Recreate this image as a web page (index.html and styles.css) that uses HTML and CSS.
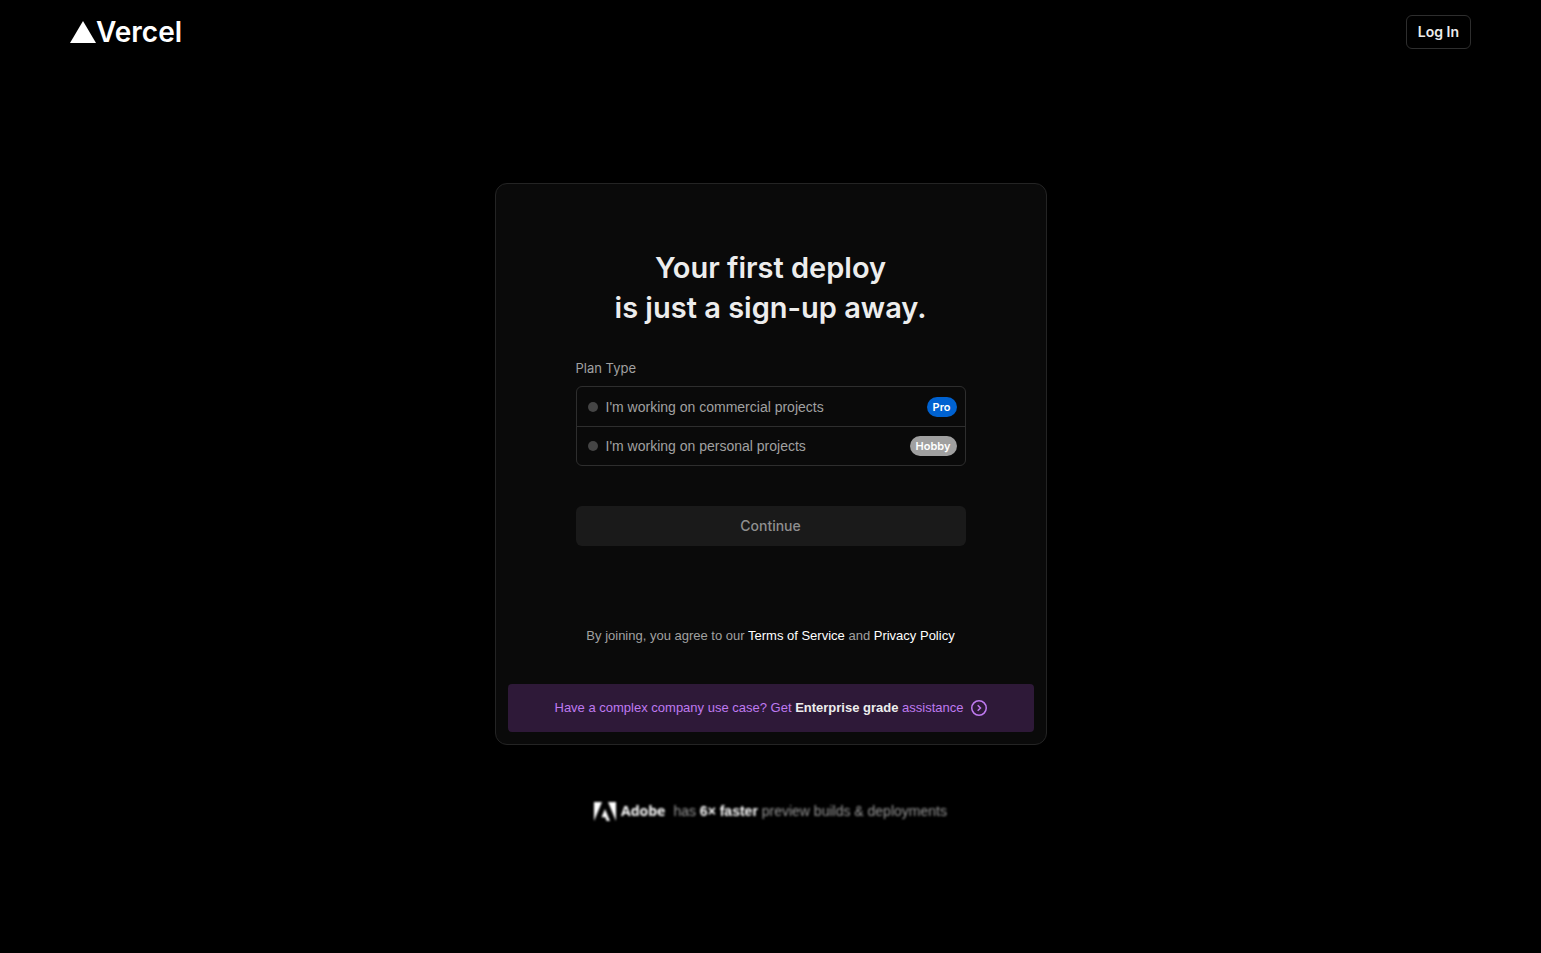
FILE: index.html
```html
<!DOCTYPE html>
<html lang="en">
<head>
<meta charset="utf-8">
<meta name="viewport" content="width=device-width, initial-scale=1">
<title>Sign Up – Vercel</title>
<link rel="stylesheet" href="styles.css">
</head>
<body>
<header class="header">
  <a class="brand" href="#">
    <svg class="brand-mark" viewBox="0 0 26 22" aria-hidden="true"><path d="M13 0 26 22H0z" fill="currentColor"/></svg>
    <span>Vercel</span>
  </a>
  <a class="login" href="#">Log In</a>
</header>
<main class="main">
  <section class="card">
    <form class="signup">
      <h1 class="title">Your first deploy<br>is just a sign-up away.</h1>
      <fieldset class="plans">
        <legend class="plans-label">Plan Type</legend>
        <div class="plan-list">
          <label class="plan">
            <input class="plan-radio" type="radio" name="plan" value="pro">
            <span class="plan-text">I'm working on commercial projects</span>
            <span class="badge badge-pro">Pro</span>
          </label>
          <label class="plan">
            <input class="plan-radio" type="radio" name="plan" value="hobby">
            <span class="plan-text">I'm working on personal projects</span>
            <span class="badge badge-hobby">Hobby</span>
          </label>
        </div>
      </fieldset>
      <button class="continue" type="submit" disabled>Continue</button>
    </form>
    <p class="legal">By joining, you agree to our <a href="#">Terms of Service</a> and <a href="#">Privacy Policy</a></p>
    <a class="enterprise" href="#">
      <span>Have a complex company use case? Get <strong>Enterprise grade</strong> assistance</span>
      <svg class="enterprise-icon" viewBox="0 0 16 16" fill="none" stroke="currentColor" stroke-width="1.5" aria-hidden="true"><circle cx="8" cy="8" r="7.25"/><path d="m6.7 5.2 2.8 2.8-2.8 2.8"/></svg>
    </a>
  </section>
  <p class="proof">
    <svg class="adobe-mark" viewBox="0 0 22 19" fill="currentColor" aria-hidden="true"><path d="M0 0h8L0 19zM14 0h8v19zM11 7l5 12h-3.300l-1.500-3.800H7.500z"/></svg>
    <span class="adobe-name">Adobe</span>
    <span>has <strong>6× faster</strong> preview builds &amp; deployments</span>
  </p>
</main>
</body>
</html>
```
FILE: styles.css
```css
* { box-sizing: border-box; }

body {
  margin: 0;
  min-height: 100vh;
  background: #000;
  color: #ededed;
  font-family: Inter, "Liberation Sans", sans-serif;
  font-size: 13px;
  line-height: 20px;
}

a { color: inherit; text-decoration: none; }

.header {
  display: flex;
  align-items: center;
  justify-content: space-between;
  height: 64px;
  padding: 0 70px;
}

.brand {
  display: flex;
  align-items: center;
  color: #fff;
  font-size: 28px;
  font-weight: 600;
  line-height: 32px;
}

.brand-mark { width: 26px; height: 22px; }

.login {
  padding: 6px 11px;
  border: 1px solid #2e2e2e;
  border-radius: 6px;
  font-size: 14px;
  font-weight: 600;
}

.main {
  display: flex;
  flex-direction: column;
  align-items: center;
  padding: 119px 16px 48px;
}

.card {
  width: 100%;
  max-width: 552px;
  padding: 12px;
  border: 1px solid #242424;
  border-radius: 12px;
  background: #0a0a0a;
}

.signup {
  max-width: 390px;
  margin: 0 auto;
  padding-top: 52px;
}

.title {
  margin: 0 0 30px;
  font-size: 29px;
  font-weight: 600;
  line-height: 40px;
  text-align: center;
}

.plans {
  min-width: 0;
  margin: 0 0 40px;
  padding: 0;
  border: 0;
}

.plans-label {
  margin-bottom: 8px;
  padding: 0;
  color: #a1a1a1;
}

.plan-list {
  border: 1px solid #2e2e2e;
  border-radius: 6px;
}

.plan {
  display: flex;
  align-items: center;
  gap: 8px;
  height: 39px;
  padding: 0 8px 0 11px;
  color: #a1a1a1;
}

.plan + .plan { border-top: 1px solid #2e2e2e; }

.plan-radio {
  appearance: none;
  width: 10px;
  height: 10px;
  margin: 0;
  border-radius: 50%;
  background: #454545;
}

.plan-radio:checked { background: #ededed; }

.plan-text {
  flex: 1;
  font-family: "Liberation Sans", Arial, sans-serif;
  font-size: 14px;
}

.badge {
  padding: 0 6px;
  border-radius: 10px;
  color: #fff;
  font-size: 11px;
  font-weight: 600;
}

.badge-pro { background: #0062d1; }
.badge-hobby { background: #a0a0a0; }

.continue {
  width: 100%;
  height: 40px;
  border: 0;
  border-radius: 6px;
  background: #1a1a1a;
  color: #8f8f8f;
  font: 500 14px/20px Inter, "Liberation Sans", sans-serif;
}

.legal {
  margin: 80px 0 38px;
  color: #a1a1a1;
  font-family: "Liberation Sans", Arial, sans-serif;
  text-align: center;
}

.legal a { color: #fff; }

.enterprise {
  display: flex;
  align-items: center;
  justify-content: center;
  gap: 7px;
  min-height: 48px;
  border-radius: 4px;
  background: #2e1938;
  color: #bf7af0;
  font-family: "Liberation Sans", Arial, sans-serif;
}

.enterprise strong { color: #ededed; font-weight: 600; }

.enterprise-icon { width: 16px; height: 16px; }

.proof {
  display: flex;
  align-items: center;
  margin: 56px 0 0;
  color: #999;
  font-family: "Liberation Sans", Arial, sans-serif;
  font-size: 14px;
  filter: blur(1px);
}

.proof strong { color: #fff; font-weight: 600; }

.adobe-mark { width: 22px; height: 19px; color: #fff; }

.adobe-name {
  margin: 0 8px 0 5px;
  color: #fff;
  font-family: "Open Sans", "Noto Sans", sans-serif;
  font-size: 14px;
  font-weight: 700;
}
```
